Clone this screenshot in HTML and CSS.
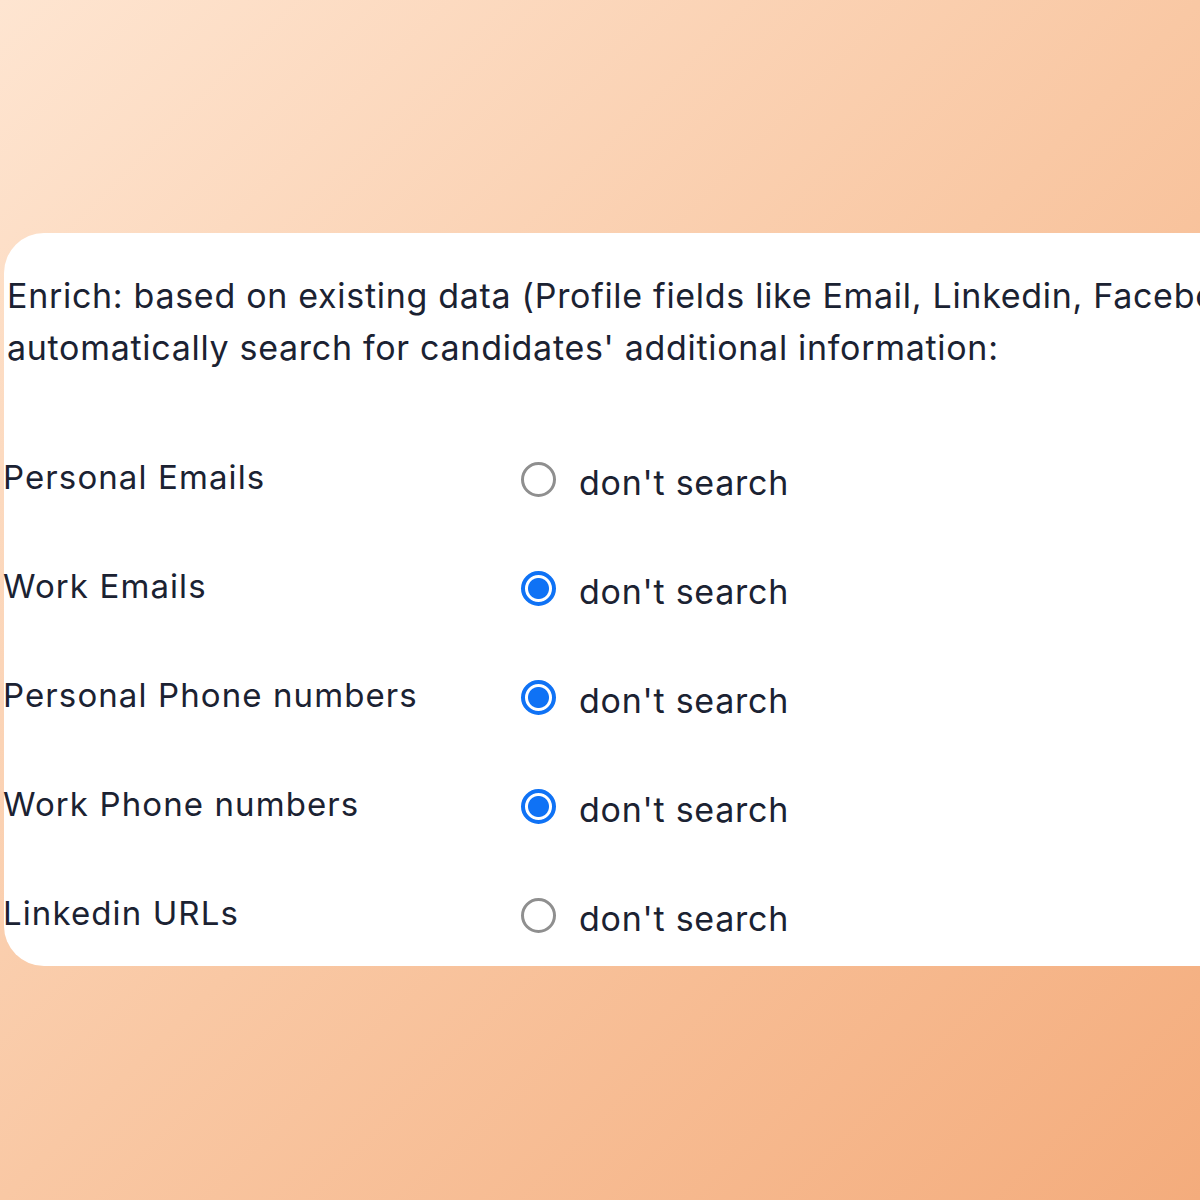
FILE: index.html
```
<!DOCTYPE html>
<html lang="en">
<head>
    <meta charset="UTF-8">
    <title>Enrich settings</title>
    <link rel="stylesheet" href="styles.css">
</head>
<body>

    <div class="card">
        <p class="intro">Enrich: based on existing data (Profile fields like Email, Linkedin, Facebook)<br>automatically search for candidates' additional information:</p>

        <div class="options">
            <div class="option-row">
                <span class="option-label">Personal Emails</span>
                <label class="choice"><input type="radio" name="personal-emails"><span>don't search</span></label>
            </div>
            <div class="option-row">
                <span class="option-label">Work Emails</span>
                <label class="choice"><input type="radio" name="work-emails" checked><span>don't search</span></label>
            </div>
            <div class="option-row">
                <span class="option-label">Personal Phone numbers</span>
                <label class="choice"><input type="radio" name="personal-phones" checked><span>don't search</span></label>
            </div>
            <div class="option-row">
                <span class="option-label">Work Phone numbers</span>
                <label class="choice"><input type="radio" name="work-phones" checked><span>don't search</span></label>
            </div>
            <div class="option-row">
                <span class="option-label">Linkedin URLs</span>
                <label class="choice"><input type="radio" name="linkedin-urls"><span>don't search</span></label>
            </div>
        </div>
    </div>

</body>
</html>
```

FILE: styles.css
```
/* General styles */
html, body {
    height: 100%;
}

body {
    margin: 0;
    overflow: hidden;
    font-family: Inter, "Noto Sans", sans-serif;
    color: #1b2232;
    background: linear-gradient(135deg, #fee5d1 0%, #f9c8a4 50%, #f4ac7c 100%);
}

.card {
    margin: 233px 0 0 4px;
    width: 1400px;
    height: 733px;
    box-sizing: border-box;
    background-color: #fff;
    border-radius: 40px 0 0 40px;
    padding-top: 37px;
}

.intro {
    margin: 0 0 0 3px;
    font-size: 34px;
    line-height: 52px;
    letter-spacing: 0.7px;
    white-space: nowrap;
}

.options {
    margin-top: 77px;
    display: flex;
    flex-direction: column;
    gap: 53px;
}

.option-row {
    display: flex;
    align-items: center;
    height: 56px;
    margin-left: -1px;
}

.option-label {
    width: 518px;
    font-size: 33px;
    letter-spacing: 1.1px;
    margin-top: -4px;
}

.choice {
    display: flex;
    align-items: center;
    gap: 23px;
    font-size: 34px;
    letter-spacing: 0.75px;
}

.choice span {
    margin-top: 7px;
}

.choice input {
    appearance: none;
    -webkit-appearance: none;
    margin: 0;
    width: 35px;
    height: 35px;
    border-radius: 50%;
    border: 3px solid #8f8f8f;
    background-color: #fff;
    box-sizing: border-box;
}

.choice input:checked {
    border: 4px solid #0f72f5;
    background: radial-gradient(circle, #0f72f5 0, #0f72f5 10px, #fff 11px);
}
```
